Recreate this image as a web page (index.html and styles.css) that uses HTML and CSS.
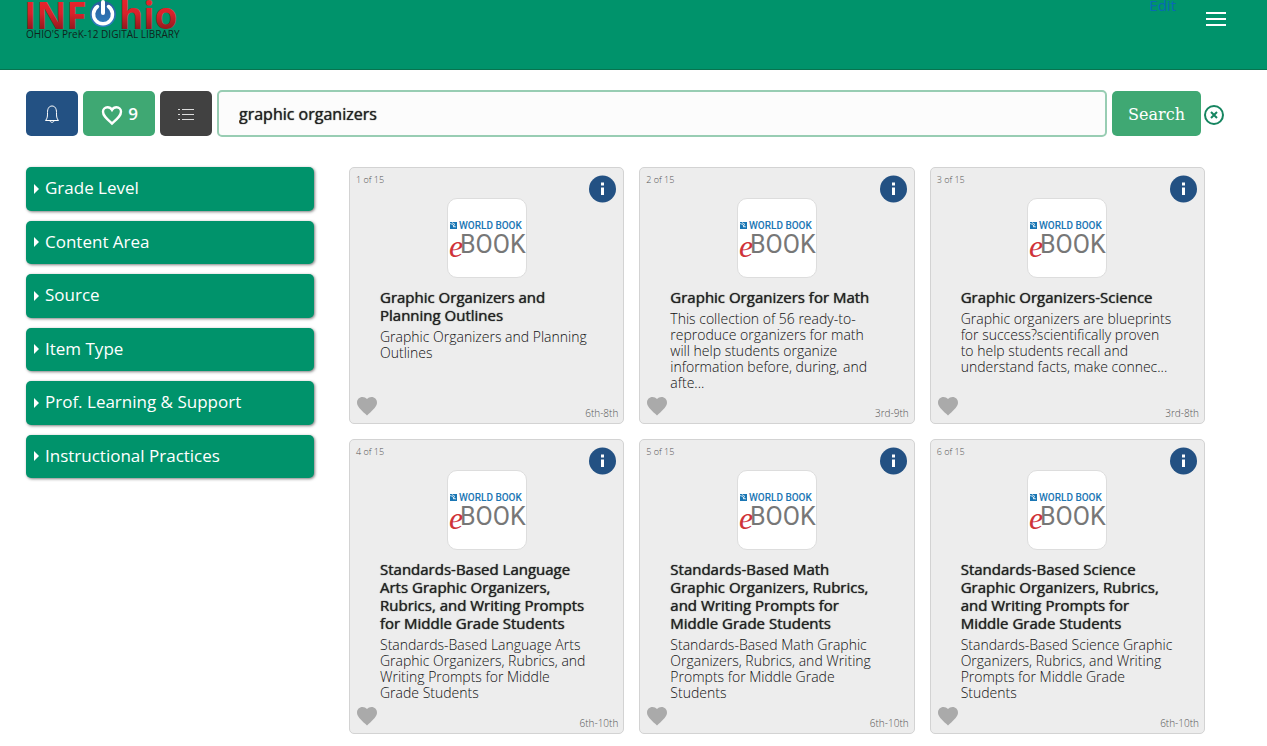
FILE: index.html
```html
<!DOCTYPE html>
<html lang="en">
<head>
<meta charset="utf-8">
<title>INFOhio Search</title>
<link rel="stylesheet" href="styles.css">
</head>
<body>
<svg class="defs" width="0" height="0" aria-hidden="true">
  <defs>
    <symbol id="heart" viewBox="0 0 24 24"><path d="M12 21.500 10.500 20.100C5.400 15.400 2 12.300 2 8.500 2 5.400 4.400 3 7.500 3c1.700 0 3.400.8 4.500 2.100C13.100 3.800 14.800 3 16.500 3 19.600 3 22 5.400 22 8.500c0 3.800-3.400 6.900-8.500 11.600z"/></symbol>
    <symbol id="info" viewBox="0 0 28 28"><circle cx="14.500" cy="14" r="13.500" fill="#235183"/><rect x="13" y="7.500" width="3" height="3" fill="#fff"/><rect x="13" y="12.500" width="3" height="7.500" fill="#fff"/></symbol>
    <symbol id="ebook" viewBox="0 0 78 78">
      <rect x="2" y="23" width="7" height="7" fill="#1a76b4"/>
      <path d="M2 24.500l3 1 1 3M4 23.500l3 2-2 1.500 3 1" stroke="#fff" stroke-width=".7" fill="none"/>
      <text x="11" y="30" class="wb-name">WORLD BOOK</text>
      <text x="1" y="58" class="wb-e">e</text>
      <text x="12" y="54" class="wb-book">BOOK</text>
    </symbol>
  </defs>
</svg>
<header class="header">
  <a class="logo" href="#" aria-label="INFOhio">
    <svg width="156" height="42" viewBox="0 0 156 42">
      <defs>
        <linearGradient id="red" x1="0" y1="0" x2="0" y2="30" gradientUnits="userSpaceOnUse"><stop offset="0" stop-color="#e8242c"/><stop offset=".45" stop-color="#d8222a"/><stop offset="1" stop-color="#8d1a1d"/></linearGradient>
        <linearGradient id="blue" x1="0" y1="0" x2="0" y2="1"><stop offset="0" stop-color="#2a5d9c"/><stop offset="1" stop-color="#2f7fc0"/></linearGradient>
      </defs>
      <text x="-2" y="29" class="logo-name">INF</text>
      <circle cx="77" cy="14" r="13" fill="url(#blue)"/>
      <path d="M71.500 6.500A9.500 9.500 0 1 0 82.500 6.500" fill="none" stroke="#fff" stroke-width="3.500" stroke-linecap="round"/>
      <path d="M77 2v11" stroke="#fff" stroke-width="4" stroke-linecap="round"/>
      <text x="93" y="29" class="logo-name">hio</text>
      <text x="0" y="38" class="logo-tag">OHIO'S PreK-12 DIGITAL LIBRARY</text>
    </svg>
  </a>
  <a class="edit" href="#">Edit</a>
  <button class="menu" type="button" aria-label="Menu"><span></span><span></span><span></span></button>
</header>

<form class="search">
  <button class="btn btn-blue" type="button" aria-label="Notifications">
    <svg width="16" height="18" viewBox="0 0 16 18" fill="none" stroke="#fff"><path d="M1.500 15.500C3.500 13.500 3.500 11 3.500 7.500 3.500 3.500 5 1 8 1s4.500 2.500 4.500 6.500c0 3.500 0 6 2 8zM6 15.500c0 2.400 4 2.400 4 0"/></svg>
  </button>
  <button class="btn btn-green btn-fav" type="button">
    <svg width="24" height="24" viewBox="0 0 24 24" fill="none" stroke="#fff" stroke-width="2.400"><path d="M12 21.500 10.500 20.100C5.900 16 3 13.300 3 9.700 3 7.200 5 5.200 7.500 5.200c1.800 0 3.500 1 4.500 2.700 1-1.700 2.700-2.700 4.500-2.700 2.500 0 4.500 2 4.500 4.500 0 3.600-2.900 6.300-7.500 10.400z"/></svg>
    <span>9</span>
  </button>
  <button class="btn btn-dark" type="button" aria-label="Lists">
    <svg width="16" height="12" viewBox="0 0 16 12" stroke="#ddd" stroke-width="1"><path d="M0 1.500h2M4 1.500h12M0 6.500h2M4 6.500h12M0 11.500h2M4 11.500h12"/></svg>
  </button>
  <input class="query" type="text" aria-label="Search terms" value="graphic organizers">
  <button class="btn btn-green btn-search" type="submit">Search</button>
  <button class="clear" type="reset" aria-label="Clear search">
    <svg width="20" height="20" viewBox="0 0 20 20" fill="none" stroke="#168560" stroke-width="2"><circle cx="10" cy="10" r="9"/><path d="M7 7l6 6M13 7l-6 6"/></svg>
  </button>
</form>

<div class="content">
  <aside class="filters">
    <button type="button" class="filter">Grade Level</button>
    <button type="button" class="filter">Content Area</button>
    <button type="button" class="filter">Source</button>
    <button type="button" class="filter">Item Type</button>
    <button type="button" class="filter">Prof. Learning &amp; Support</button>
    <button type="button" class="filter">Instructional Practices</button>
  </aside>
  <main class="results">
    <article class="card">
      <div class="card-top"><span class="count">1 of 15</span><button class="info" type="button" aria-label="More information"><svg width="28" height="28"><use href="#info"/></svg></button></div>
      <svg class="cover" width="80" height="80"><use href="#ebook"/></svg>
      <div class="text"><h2>Graphic Organizers and Planning Outlines</h2><p>Graphic Organizers and Planning Outlines</p></div>
      <div class="card-foot"><button class="like" type="button" aria-label="Favorite"><svg width="24" height="24"><use href="#heart"/></svg></button><span class="grade">6th-8th</span></div>
    </article>
    <article class="card">
      <div class="card-top"><span class="count">2 of 15</span><button class="info" type="button" aria-label="More information"><svg width="28" height="28"><use href="#info"/></svg></button></div>
      <svg class="cover" width="80" height="80"><use href="#ebook"/></svg>
      <div class="text"><h2>Graphic Organizers for Math</h2><p>This collection of 56 ready-to-reproduce organizers for math will help students organize information before, during, and afte...</p></div>
      <div class="card-foot"><button class="like" type="button" aria-label="Favorite"><svg width="24" height="24"><use href="#heart"/></svg></button><span class="grade">3rd-9th</span></div>
    </article>
    <article class="card">
      <div class="card-top"><span class="count">3 of 15</span><button class="info" type="button" aria-label="More information"><svg width="28" height="28"><use href="#info"/></svg></button></div>
      <svg class="cover" width="80" height="80"><use href="#ebook"/></svg>
      <div class="text"><h2>Graphic Organizers-Science</h2><p>Graphic organizers are blueprints for success?scientifically proven to help students recall and understand facts, make connec...</p></div>
      <div class="card-foot"><button class="like" type="button" aria-label="Favorite"><svg width="24" height="24"><use href="#heart"/></svg></button><span class="grade">3rd-8th</span></div>
    </article>
    <article class="card">
      <div class="card-top"><span class="count">4 of 15</span><button class="info" type="button" aria-label="More information"><svg width="28" height="28"><use href="#info"/></svg></button></div>
      <svg class="cover" width="80" height="80"><use href="#ebook"/></svg>
      <div class="text"><h2>Standards-Based Language Arts Graphic Organizers, Rubrics, and Writing Prompts for Middle Grade Students</h2><p>Standards-Based Language Arts Graphic Organizers, Rubrics, and Writing Prompts for Middle Grade Students</p></div>
      <div class="card-foot"><button class="like" type="button" aria-label="Favorite"><svg width="24" height="24"><use href="#heart"/></svg></button><span class="grade">6th-10th</span></div>
    </article>
    <article class="card">
      <div class="card-top"><span class="count">5 of 15</span><button class="info" type="button" aria-label="More information"><svg width="28" height="28"><use href="#info"/></svg></button></div>
      <svg class="cover" width="80" height="80"><use href="#ebook"/></svg>
      <div class="text"><h2>Standards-Based Math Graphic Organizers, Rubrics, and Writing Prompts for Middle Grade Students</h2><p>Standards-Based Math Graphic Organizers, Rubrics, and Writing Prompts for Middle Grade Students</p></div>
      <div class="card-foot"><button class="like" type="button" aria-label="Favorite"><svg width="24" height="24"><use href="#heart"/></svg></button><span class="grade">6th-10th</span></div>
    </article>
    <article class="card">
      <div class="card-top"><span class="count">6 of 15</span><button class="info" type="button" aria-label="More information"><svg width="28" height="28"><use href="#info"/></svg></button></div>
      <svg class="cover" width="80" height="80"><use href="#ebook"/></svg>
      <div class="text"><h2>Standards-Based Science Graphic Organizers, Rubrics, and Writing Prompts for Middle Grade Students</h2><p>Standards-Based Science Graphic Organizers, Rubrics, and Writing Prompts for Middle Grade Students</p></div>
      <div class="card-foot"><button class="like" type="button" aria-label="Favorite"><svg width="24" height="24"><use href="#heart"/></svg></button><span class="grade">6th-10th</span></div>
    </article>
  </main>
</div>
</body>
</html>
```
FILE: styles.css
```css
* { box-sizing: border-box; }
body {
  margin: 0;
  background: #fff;
  color: #222;
  font-family: "Open Sans", "Noto Sans", sans-serif;
}
button { border: 0; padding: 0; background: none; font: inherit; cursor: pointer; }
svg { display: block; }
.defs { position: absolute; }

.header {
  display: flex;
  align-items: flex-start;
  height: 70px;
  padding: 0 41px 0 26px;
  background: #00936b;
  border-bottom: 1px solid #08734f;
  overflow: hidden;
}
.logo-name { font-size: 37px; font-weight: 700; fill: url(#red); }
.logo-tag { font-size: 10px; fill: #10241c; }
.edit {
  margin-left: auto;
  margin-right: 30px;
  color: #0a69b4;
  font-size: 15px;
  line-height: 10px;
  text-decoration: none;
}
.menu { display: grid; gap: 4px; margin-top: 12px; }
.menu span { width: 20px; height: 2px; background: #fff; }

.search {
  display: flex;
  align-items: center;
  gap: 5px;
  padding: 20px 43px 0 26px;
}
.btn {
  display: flex;
  align-items: center;
  justify-content: center;
  gap: 4px;
  height: 45px;
  border-radius: 5px;
  color: #fff;
  font-size: 17px;
  flex: none;
}
.btn-blue, .btn-dark { width: 52px; }
.btn-blue { background: #235183; }
.btn-green { background: #3fa873; }
.btn-dark { background: #414141; }
.btn-fav { width: 72px; font-weight: 600; }
.btn-search { padding: 2px 16px 0; font-family: "Roboto Slab", "DejaVu Serif", serif; font-size: 16px; }
.query {
  flex: 1;
  min-width: 0;
  height: 47px;
  padding: 0 20px;
  border: 2px solid #98cdb3;
  border-radius: 5px;
  background: #fcfcfc;
  color: #222;
  font: 400 16px "Open Sans", "Noto Sans", sans-serif;
  text-shadow: 0 0 1px #222;
}
.clear { margin-left: -2px; padding-top: 2px; }

.content {
  display: flex;
  align-items: flex-start;
  gap: 35px;
  padding: 30px 62px 11px 26px;
}
.filters { display: grid; grid-auto-rows: 1fr; gap: 10px; flex: 0 0 288px; min-height: 311px; }
.filter {
  display: flex;
  align-items: center;
  gap: 6px;
  padding: 0 8px 2px;
  border-radius: 5px;
  background: #00936b;
  box-shadow: 1px 1px 3px rgba(0, 0, 0, .5);
  color: #fff;
  font-size: 17px;
}
.filter::before {
  content: "";
  margin-top: 2px;
  border: solid transparent;
  border-width: 5px 0 5px 5px;
  border-left-color: #fff;
}

.results {
  display: grid;
  grid-template-columns: repeat(3, 1fr);
  gap: 15px;
  flex: 1;
}
.card {
  display: flex;
  flex-direction: column;
  border: 1px solid #d3d3d3;
  border-radius: 5px;
  background: #ededed;
}
.card-top {
  display: flex;
  justify-content: space-between;
  align-items: flex-start;
  height: 30px;
  padding: 7px 7px 0 6px;
}
.count, .grade { color: #555; font-size: 10px; font-weight: 300; line-height: 10px; }
.count { font-size: 9px; }
.cover {
  align-self: center;
  border: 1px solid #ddd;
  border-radius: 10px;
  background: #fff;
}
.text { padding: 10px 31px 0 30px; }
.text h2 {
  margin: 0 0 5px;
  font-size: 15px;
  font-weight: 400;
  line-height: 18px;
  text-shadow: 0 0 1px #222;
}
.text p { margin: 0; color: #111; font-size: 14px; font-weight: 300; line-height: 16px; }
.card-foot {
  display: flex;
  justify-content: space-between;
  align-items: flex-end;
  margin-top: auto;
  padding: 3px 5px 5px;
}
.like { fill: #aaa; }

.wb-name { font: 500 10px Roboto, sans-serif; fill: #1a76b4; }
.wb-book { font: 400 25px Roboto, sans-serif; fill: #777; }
.wb-e { font: italic 32px "Liberation Serif", serif; fill: #cf3339; }
```
